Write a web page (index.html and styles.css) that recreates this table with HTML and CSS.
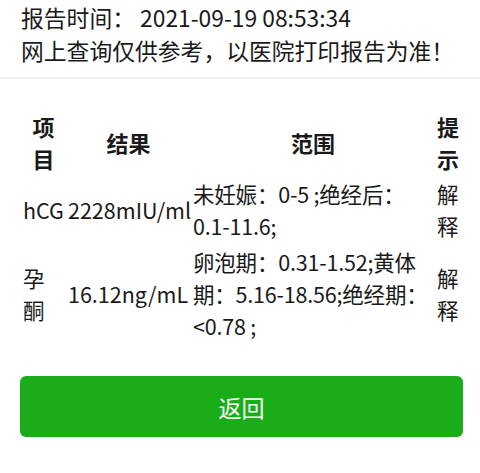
FILE: index.html
```html
<!DOCTYPE html>
<html lang="zh">
<head>
<meta charset="utf-8">
<link rel="stylesheet" href="styles.css">
</head>
<body>
<div class="head">
  <div class="line">报告时间：&nbsp;2021-09-19 08:53:34</div>
  <div class="line">网上查询仅供参考，以医院打印报告为准！</div>
</div>
<div class="content">
  <table class="report">
    <thead>
      <tr><th class="c1">项目</th><th class="c2">结果</th><th class="c3">范围</th><th class="c4">提示</th></tr>
    </thead>
    <tbody>
      <tr>
        <td>hCG</td>
        <td>2228mIU/ml</td>
        <td><span class="rl">未妊娠：0-5 ;绝经后：</span><span class="rl">0.1-11.6;</span></td>
        <td>解释</td>
      </tr>
      <tr>
        <td>孕酮</td>
        <td>16.12ng/mL</td>
        <td><span class="rl">卵泡期：0.31-1.52;黄体</span><span class="rl">期：5.16-18.56;绝经期：</span><span class="rl">&lt;0.78 ;</span></td>
        <td>解释</td>
      </tr>
    </tbody>
  </table>
  <button class="back">返回</button>
</div>
</body>
</html>
```
FILE: styles.css
```css
html, body {
  margin: 0;
  padding: 0;
  background: #fff;
}
body {
  font-family: "Noto Sans CJK SC", "Noto Sans", sans-serif;
  color: #1a1a1a;
  font-size: 22px;
}
.head {
  padding: 1px 20px 10px 21px;
  border-bottom: 2px solid #f1f1f1;
  font-size: 22.8px;
}
.line {
  line-height: 33px;
  white-space: nowrap;
}
.content {
  padding: 28px 17px 0 20px;
}
.report {
  width: 442px;
  table-layout: fixed;
  border-spacing: 2px;
}
.c1 { width: 41px; }
.c2 { width: 121px; }
.c3 { width: 240px; }
.c4 { width: 22px; }
.report th, .report td {
  padding: 1px;
  line-height: 32px;
  vertical-align: middle;
  font-size: 21.5px;
}
.report th {
  font-weight: 700;
  text-align: center;
  font-size: 22px;
}
.report td {
  text-align: left;
}
.rl {
  display: block;
  white-space: nowrap;
  letter-spacing: -0.2px;
}
.back {
  display: block;
  width: 443px;
  height: 61px;
  margin-top: 31px;
  border: none;
  border-radius: 6px;
  background: #1aad19;
  color: #fff;
  font-family: "Noto Sans CJK SC", sans-serif;
  font-size: 23px;
  padding: 0;
}
```
